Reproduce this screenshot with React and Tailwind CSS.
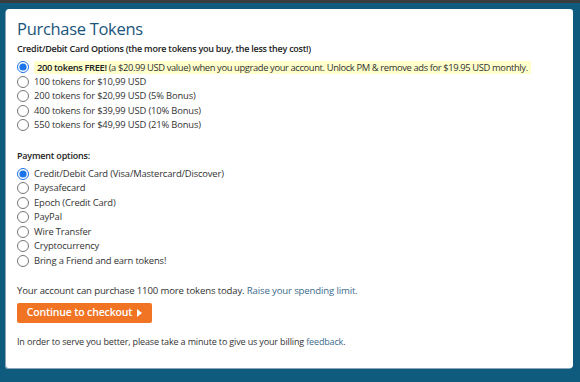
import React from 'react';

const tokenOptions = [
  '100 tokens for $10,99 USD',
  '200 tokens for $20,99 USD (5% Bonus)',
  '400 tokens for $39,99 USD (10% Bonus)',
  '550 tokens for $49,99 USD (21% Bonus)',
];

const paymentOptions = [
  'Credit/Debit Card (Visa/Mastercard/Discover)',
  'Paysafecard',
  'Epoch (Credit Card)',
  'PayPal',
  'Wire Transfer',
  'Cryptocurrency',
  'Bring a Friend and earn tokens!',
];

const Radio = ({ name, checked }) => (
  <input
    type="radio"
    name={name}
    defaultChecked={checked}
    className="m-0 w-[12px] h-[12px] shrink-0 accent-[#1a73e8]"
  />
);

const App = () => {
  return (
    <div
      className="w-[580px] h-[382px] bg-[#0f5b7e] border-t-[3px] border-[#3a3d40] pt-[6px] pl-[6px] pr-[7px] overflow-hidden"
      style={{ fontFamily: '"Open Sans", "Liberation Sans", sans-serif' }}
    >
      <div className="h-[359px] bg-white rounded-[3px] shadow-[-1px_1px_0_#8aa6b8] px-[11px] pt-[10px] text-[#333] text-[9.4px] tracking-[-0.15px]">
        <h1 className="text-[16.5px] leading-[20px] text-[#1b557a] font-normal tracking-[-0.3px]">Purchase Tokens</h1>

        <p className="mt-[4px] text-[9px] font-semibold text-[#222] leading-[12px] tracking-[-0.25px]">
          Credit/Debit Card Options (the more tokens you buy, the less they cost!)
        </p>

        <div className="mt-[5px] flex flex-col">
          <label className="flex items-center gap-[5px] h-[14.5px]">
            <Radio name="tokens" checked />
            <span className="bg-[#ffffcc] px-[3px] leading-[13px] tracking-[-0.38px]">
              <b className="font-semibold text-[#222]">200 tokens FREE!</b> (a $20.99 USD value) when you upgrade your account. Unlock PM &amp; remove ads for $19.95 USD monthly.
            </span>
          </label>
          {tokenOptions.map((t) => (
            <label key={t} className="flex items-center gap-[5px] h-[14.5px]">
              <Radio name="tokens" />
              <span>{t}</span>
            </label>
          ))}
        </div>

        <p className="mt-[17px] font-semibold text-[#222] leading-[12px] text-[9px] tracking-[-0.2px]">Payment options:</p>

        <div className="mt-[5px] flex flex-col">
          {paymentOptions.map((t, i) => (
            <label key={t} className="flex items-center gap-[5px] h-[14.5px]">
              <Radio name="pay" checked={i === 0} />
              <span>{t}</span>
            </label>
          ))}
        </div>

        <p className="mt-[17px] leading-[12px] text-[9.6px]">
          Your account can purchase 1100 more tokens today.{' '}
          <a href="#" className="text-[#3b6b8c]">Raise your spending limit.</a>
        </p>

        <button
          type="button"
          className="mt-[6px] h-[20px] w-[135px] bg-[#f07424] rounded-[2px] text-white text-[10.5px] font-semibold flex items-center justify-center gap-[5px]"
        >
          Continue to checkout
          <svg width="5" height="8" viewBox="0 0 5 8"><path d="M0 0 L5 4 L0 8 Z" fill="white" /></svg>
        </button>

        <p className="mt-[13px] text-[9px] leading-[12px]">
          In order to serve you better, please take a minute to give us your billing{' '}
          <a href="#" className="text-[#3b6b8c]">feedback</a>.
        </p>
      </div>
    </div>
  );
};

export default App;
